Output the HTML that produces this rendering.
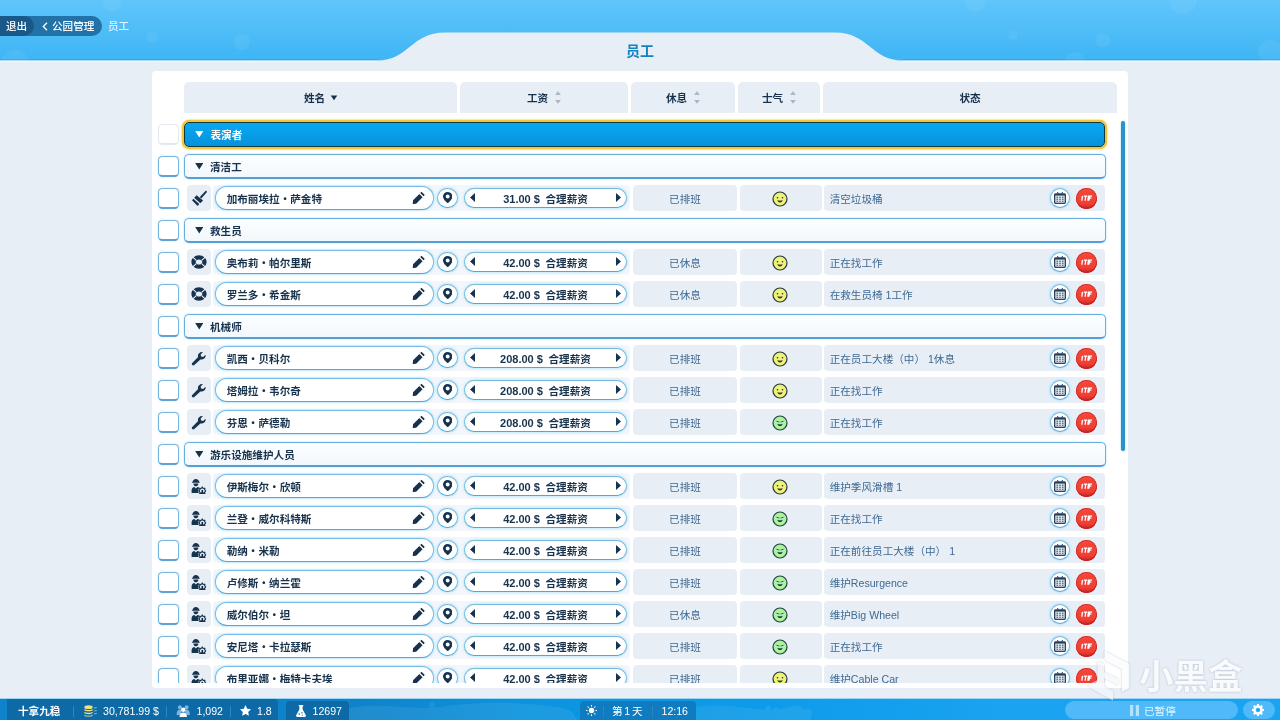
<!DOCTYPE html>
<html lang="zh-CN">
<head>
<meta charset="utf-8">
<title>员工</title>
<style>
*{box-sizing:border-box;margin:0;padding:0}
html,body{width:1280px;height:720px;overflow:hidden}
body{position:relative;background:#e8eef5;font-family:"Liberation Sans","Noto Sans CJK SC",sans-serif;font-size:10.6px;color:#17324d;line-height:1}
#root{position:absolute;left:0;top:0;width:1280px;height:720px;will-change:transform}
#topbg{position:absolute;left:0;top:0;width:1280px;height:64px}
/* breadcrumb */
.nav{position:absolute;top:16px;left:0;height:20px;border-radius:0 10px 10px 0;color:#fff;font-size:10.6px;font-weight:500;line-height:20.6px;white-space:nowrap}
#nav2{width:102px;background:#2272a8;padding-left:43px}
#nav1{width:34px;background:#1a5987;padding-left:6px}
#nav2 svg{position:absolute;left:42px;top:5.5px;width:6px;height:9px}
#nav2 span{position:absolute;left:52px;top:0}
#nav3{position:absolute;left:108px;top:16px;height:20px;line-height:20.6px;color:#dff3ff;font-weight:500}
#title{position:absolute;left:540px;width:200px;top:42px;height:18px;line-height:18px;text-align:center;font-size:14px;font-weight:700;color:#1484c0}
/* panel */
#panel{position:absolute;left:152px;top:71px;width:976px;height:617px;background:#fff;border-radius:4px}
#clip{position:absolute;left:152px;top:114px;width:976px;height:569px;overflow:hidden;will-change:transform}
#clip > div{position:absolute}
.hd{position:absolute;top:82px;height:30.6px;background:#e8eef5;border-radius:5px 5px 0 0;display:flex;justify-content:center;align-items:center;padding-top:2px;font-weight:700;color:#17324d;font-size:10.6px}
.hd svg{display:block;margin:-2px 0 0 7px;width:6px;height:13px}
/* rows (coordinates inside #clip are page coords minus (152,114)) */
#inner{position:absolute;left:-152px;top:-114px;width:1280px;height:720px}
#inner > div{position:absolute}
.cb{left:158px;width:21px;height:21px;border-radius:4.5px;background:#fff;border:1px solid #78b5df;border-bottom:2px solid #5fa3d5;box-shadow:0 0 2px rgba(130,215,250,.7)}
.cb.dis{border-color:#e3e8ef;box-shadow:none}
.grp{left:184px;width:921.5px;height:25px;border-radius:5px;background:linear-gradient(#fcfeff,#f3f8fd);border:1px solid #6aafdd;border-bottom:2px solid #559fd4;box-shadow:0 0 2px rgba(130,215,250,.8);font-weight:700;color:#17324d}
.grp span{position:absolute;left:25px;top:0;line-height:25.2px;font-size:10.6px}
.grp .tri{position:absolute;left:9.5px;top:8.4px;width:8.5px;height:6.5px;fill:#17324d}
.grp.sel{left:184px;width:921px;height:25.5px;border-radius:5px;background:linear-gradient(#0aa8f2,#0692dc);border:1.4px solid #0b3b40;box-shadow:0 0 0 2.200px #f3c53c,0 0 3px 2px rgba(243,197,60,.55);color:#fff}
.grp.sel span{left:25.5px;line-height:24.8px}
.grp.sel .tri{left:9.5px;top:8.4px;fill:#fff}
.row{left:184px;width:922px;height:26px}
.row > div{position:absolute}
.cell{top:0;height:26px;background:#e8eef5;border-radius:4px}
.ic{left:3px;width:24px}
.lt{left:28.5px;width:417px;background:#f3f6fa}
.ic svg{position:absolute;left:4.1px;top:5px;width:16px;height:16px;fill:#17324d}
.pill{background:#fff;border:1px solid #77bbe5;border-bottom:1.6px solid #55a5d8;border-radius:12px;box-shadow:0 0 2.5px rgba(120,215,250,.9)}
.name{left:31px;top:1.4px;width:219px;height:23.8px}
.name span{position:absolute;left:10.7px;top:0;line-height:24.2px;font-weight:700;white-space:nowrap}
.name .pen{position:absolute;right:7.5px;top:3.6px;width:13.5px;height:13.5px;fill:#17324d}
.circ{width:20.6px;height:20.6px;border-radius:50%;background:#fff;border:1px solid #77bbe5;border-bottom:1.6px solid #55a5d8;box-shadow:0 0 2.5px rgba(120,215,250,.9)}
.pin{left:253.2px;top:2.8px}
.pin svg{position:absolute;left:4.6px;top:3.1px;width:9.4px;height:11.3px;fill:#17324d}
.sal{left:280px;top:2.9px;width:163px;height:20.4px;text-align:center}
.n{font-size:11px;margin-right:-.3px}
.sal span{line-height:21.2px;font-weight:700;white-space:nowrap}
.sal svg{position:absolute;top:4.2px;width:5px;height:9px;fill:#17324d}
.sal .al{left:4.5px}.sal .ar{right:5.5px}
.rest{left:449px;width:104px;text-align:center;line-height:28.2px;color:#3f6a93}
.mood{left:556px;width:82px}
.mood svg{position:absolute;left:32.4px;top:6.1px;width:16px;height:16px}
.stat{left:639.7px;width:281.8px;line-height:28.2px;color:#3f6a93}
.stat span{position:absolute;left:6px;white-space:nowrap}
.cal{left:865.7px;top:2.8px}
.cal svg{position:absolute;left:3.3px;top:3px;width:12px;height:12px}
.fire{left:891.8px;top:2.9px;width:20.8px;height:20.8px;border-radius:50%;background:linear-gradient(#f4483c 0,#ee3f35 75%,#c92622 100%);box-shadow:inset 0 -1.5px 0 #c3221f,inset 0 0 0 .8px #cf2f2a}
.fire svg{position:absolute;left:4.8px;top:6.7px;width:11.4px;height:6.4px;fill:#fff}
#sb{position:absolute;left:1121px;top:121px;width:4px;height:330px;border-radius:2px;background:#2c92c7;box-shadow:0 0 2px rgba(120,215,250,.9)}
/* bottom bar */
#bar{position:absolute;left:0;top:698px;width:1280px;height:22px;background:linear-gradient(90deg,#0f83c9 0,#0f83c9 355px,#0b93de 520px,#0d9be9 760px,#19a3f1 1000px,#19a3f1 100%);border-top:1px solid #9fd5f4;color:#fff;font-size:10.6px;white-space:nowrap}
#bar > *{position:absolute}
.dk{background:#0d6aa6;top:0;height:22px}
#bar .t{top:0;line-height:24px}
#bar .sep{top:6.500px;width:1px;height:11px;background:#2f86bd}
#wm{position:absolute;left:1086px;top:648px;width:170px;height:56px;opacity:.7;filter:drop-shadow(0 0 1.2px rgba(90,110,140,.5))}
</style>
</head>
<body>
<div id="root">
<svg width="0" height="0" style="position:absolute">
<defs>
<path id="i-down" d="M0 0H10L5 8Z"/>
<g id="i-brush"><path d="M14.900.6 16.100 1.800 10.300 8.400 8.800 7.100Z"/><path d="M5.600 5.300 12.100 10.500 9.300 13.300 3.200 7.800Z"/><path d="M2.400 8.700 8.300 13.900 6.600 16 5.600 15 1 10.300Z"/></g>
<g id="i-buoy"><path fill-rule="evenodd" d="M8 1.3C12.2 1.3 15.6 4.3 15.6 8S12.2 14.7 8 14.7.4 11.7.4 8 3.800 1.300 8 1.300ZM8 5.400C6.100 5.400 4.700 6.600 4.700 8S6.100 10.600 8 10.600 11.300 9.400 11.300 8 9.900 5.400 8 5.400Z"/><path d="M2.200 2.700 5.700 5.900 4.900 6.700 1.400 3.600ZM13.800 2.700 10.300 5.900 11.100 6.700 14.600 3.600ZM2.200 13.300 5.700 10.100 4.900 9.300 1.400 12.400ZM13.800 13.300 10.300 10.100 11.100 9.300 14.600 12.400Z" fill="#e8eef5"/></g>
<path id="i-wrench" transform="translate(.2 .9) scale(.94)" d="M15.300 4.100C15.600 5.600 15.100 7.200 13.900 8.200 12.700 9.200 11.200 9.500 9.800 9.100L3.300 15.100C2.700 15.700 1.700 15.700 1.100 15.100.5 14.500.5 13.500 1.100 12.900L7.300 6.600C6.900 5.200 7.300 3.600 8.400 2.500 9.500 1.400 11.100 1 12.500 1.300L10.100 3.700 10.500 5.900 12.700 6.400Z"/>
<g id="i-maint"><path d="M1.600 4.300C1.600 2.400 3 1 4.900 1 6.500 1 7.800 2 8.100 3.500L8.600 3.800V4.700H.9V3.900L1.600 3.700ZM2.400 5.400H7.400C7.400 7 6.300 8.300 4.900 8.300S2.400 7 2.400 5.400ZM.6 15V12C.6 10.300 1.800 9.100 3.300 8.900L4.900 10.500 6.500 8.900C7.300 9 8 9.400 8.400 10 7.700 10.800 7.300 11.800 7.300 12.900 7.300 13.700 7.500 14.400 7.800 15Z"/><path fill-rule="evenodd" transform="translate(-.9 0)" d="M11.700 8.600 12.700 8.600 13 9.500 13.900 9.900 14.800 9.500 15.500 10.300 15.100 11.100 15.400 12 16 12.400 16 13.400 15.400 13.800 15.100 14.700 15.500 15.500 15.100 16H9.300L8.900 15.500 9.300 14.700 9 13.800 8.400 13.400 8.400 12.400 9 12 9.300 11.100 8.900 10.300 9.600 9.500 10.500 9.900 11.400 9.500ZM12.200 10.600A2.300 2.300 0 0 0 10.700 14.700L11.500 13.300A.9.900 0 1 1 12.900 13.300L13.700 14.700A2.300 2.300 0 0 0 12.200 10.600Z"/></g>
<path id="i-pen" d="M9.900.7 13.300 4.100 11.900 5.500 8.500 2.100ZM7.600 3 11 6.400 4.300 13.100.7 13.600 1.100 9.700Z"/>
<path id="i-pin" fill-rule="evenodd" d="M5 0C7.800 0 10 2.100 10 4.800 10 7.300 7.300 10.100 5 12 2.700 10.100 0 7.300 0 4.800 0 2.100 2.200 0 5 0ZM5 2.600A2.100 2.100 0 1 0 5 6.800 2.100 2.100 0 1 0 5 2.600Z"/>
<g id="i-face-y"><circle cx="8" cy="8" r="7" fill="#eff272" stroke="#22383f" stroke-width="1.200"/><circle cx="5.500" cy="6.700" r=".8" fill="#22383f"/><circle cx="10.500" cy="6.700" r=".8" fill="#22383f"/><path d="M5.300 9.100C6.300 9.900 9.700 9.900 10.700 9.100 10.400 10.800 9.400 11.500 8 11.500S5.600 10.800 5.300 9.100Z" fill="#22383f"/></g>
<g id="i-face-g"><circle cx="8" cy="8" r="7" fill="#acf1a5" stroke="#1f4537" stroke-width="1.200"/><path d="M4.600 5.700 7.400 6.700 7.200 7.400 4.400 6.600ZM11.400 5.700 8.600 6.700 8.800 7.400 11.600 6.600Z" fill="#1f4537"/><path d="M5.300 8.700C6.300 9.500 9.700 9.500 10.700 8.700 10.400 10.300 9.400 11 8 11S5.600 10.300 5.300 8.700Z" fill="#1f4537"/></g>
<g id="i-cal"><path fill="#2a4058" d="M3.200 0H4.300V1.500H3.200ZM7.700 0H8.800V1.500H7.700Z"/><rect x=".65" y="1.850" width="10.700" height="9.500" rx="1.100" fill="#dde5ee" stroke="#2a4058" stroke-width="1.300"/><path fill="#2a4058" d="M.65 1.900H11.350V3.600H.65Z"/><path fill="#2c4a5e" d="M2.500 4.700H4V5.800H2.500ZM5.250 4.700H6.750V5.800H5.250ZM8 4.700H9.500V5.800H8ZM2.500 6.700H4V7.800H2.500ZM5.250 6.700H6.750V7.800H5.250ZM8 6.700H9.500V7.800H8ZM2.500 8.700H4V9.800H2.500ZM5.250 8.700H6.750V9.800H5.250ZM8 8.700H9.500V9.800H8Z"/></g>
<g id="i-fire"><path d="M.8 1.200H2.200L1.600 7.200H.2ZM2.900.6H6.700L6.500 2.100H5.600L5.100 7.200H3.700L4.200 2.100H2.700ZM7.300.6H11.900L11.700 2.100H9.500L9.400 3.200H11.100L10.900 4.600H9.200L8.900 7.200H6.500Z"/></g>
</defs>
</svg>

<!-- top background -->
<svg id="topbg" viewBox="0 0 1280 64">
<defs><linearGradient id="tg" x1="0" y1="0" x2="0" y2="1"><stop offset="0" stop-color="#60c5fb"/><stop offset="1" stop-color="#3eb5f4"/></linearGradient><clipPath id="tc"><path d="M0 0H1280V60.500H903C871 60.500 869 32.500 835 32.500H445C411 32.500 409 60.500 377 60.500H0Z"/></clipPath></defs>
<path d="M0 0H1280V60.500H903C871 60.500 869 32.500 835 32.500H445C411 32.500 409 60.500 377 60.500H0Z" fill="url(#tg)"/>
<path d="M0 59.800H377M903 59.800H1280" stroke="#3a9bd4" stroke-width="1.400" fill="none" opacity=".6"/><path d="M0 61.200H377M903 61.200H1280" stroke="#f6fbff" stroke-width="1.200" fill="none" opacity=".8"/>
<g fill="#fff" opacity=".06" clip-path="url(#tc)"><circle cx="112" cy="3" r="9"/><circle cx="152" cy="37" r="6"/><circle cx="242" cy="42" r="8"/><circle cx="15" cy="64" r="14"/><circle cx="975" cy="2" r="10"/><circle cx="1103" cy="40" r="7"/><circle cx="1183" cy="0" r="14"/><circle cx="1013" cy="35" r="5"/><circle cx="1270" cy="52" r="12"/><circle cx="1075" cy="62" r="10"/></g>
</svg>

<div class="nav" id="nav2"><svg viewBox="0 0 6 9"><path d="M5 .7 1.300 4.500 5 8.300" fill="none" stroke="#fff" stroke-width="1.300"/></svg><span>公园管理</span></div>
<div class="nav" id="nav1">退出</div>
<div id="nav3">员工</div>
<div id="title">员工</div>

<div id="panel"></div>
<div class="hd" style="left:184px;width:273px">姓名<svg viewBox="0 0 6 13" style="margin-left:6px;overflow:visible"><path d="M-.3 4.600H6.300L3 9.200Z" fill="#17324d"/></svg></div>
<div class="hd" style="left:460px;width:168px">工资<svg viewBox="0 0 6 13"><path d="M3 .3 5.900 3.900H.1ZM3 12.700 5.900 9.100H.1Z" fill="#aab6c3"/></svg></div>
<div class="hd" style="left:631px;width:104px">休息<svg viewBox="0 0 6 13"><path d="M3 .3 5.900 3.900H.1ZM3 12.700 5.900 9.100H.1Z" fill="#aab6c3"/></svg></div>
<div class="hd" style="left:738px;width:82px">士气<svg viewBox="0 0 6 13"><path d="M3 .3 5.900 3.900H.1ZM3 12.700 5.900 9.100H.1Z" fill="#aab6c3"/></svg></div>
<div class="hd" style="left:823px;width:294px">状态</div>

<div id="clip"><div id="inner">
<div class="cb dis" style="top:123.5px"></div>
<div class="grp sel" style="top:121.6px"><svg class="tri" viewBox="0 0 10 8"><use href="#i-down"/></svg><span>表演者</span></div>
<div class="cb" style="top:155.5px"></div>
<div class="grp" style="top:153.8px"><svg class="tri" viewBox="0 0 10 8"><use href="#i-down"/></svg><span>清洁工</span></div>
<div class="cb" style="top:187.5px"></div>
<div class="row" style="top:185px"><div class="cell ic"><svg viewBox="0 0 16 16"><use href="#i-brush"/></svg></div><div class="cell lt"></div><div class="pill name"><span>加布丽埃拉・萨金特</span><svg class="pen" viewBox="0 0 14 14"><use href="#i-pen"/></svg></div><div class="circ pin"><svg viewBox="0 0 10 12"><use href="#i-pin"/></svg></div><div class="pill sal"><svg class="al" viewBox="0 0 5 9"><path d="M5 0V9L0 4.5Z"/></svg><span><b class="n">31.00 $</b>&nbsp; 合理薪资</span><svg class="ar" viewBox="0 0 5 9"><path d="M0 0V9L5 4.5Z"/></svg></div><div class="cell rest">已排班</div><div class="cell mood"><svg viewBox="0 0 16 16"><use href="#i-face-y"/></svg></div><div class="cell stat"><span>清空垃圾桶</span></div><div class="circ cal"><svg viewBox="0 0 12 12"><use href="#i-cal"/></svg></div><div class="fire"><svg viewBox="0 0 12 8" preserveAspectRatio="none"><use href="#i-fire"/></svg></div></div>
<div class="cb" style="top:219.5px"></div>
<div class="grp" style="top:217.8px"><svg class="tri" viewBox="0 0 10 8"><use href="#i-down"/></svg><span>救生员</span></div>
<div class="cb" style="top:251.5px"></div>
<div class="row" style="top:249px"><div class="cell ic"><svg viewBox="0 0 16 16"><use href="#i-buoy"/></svg></div><div class="cell lt"></div><div class="pill name"><span>奥布莉・帕尔里斯</span><svg class="pen" viewBox="0 0 14 14"><use href="#i-pen"/></svg></div><div class="circ pin"><svg viewBox="0 0 10 12"><use href="#i-pin"/></svg></div><div class="pill sal"><svg class="al" viewBox="0 0 5 9"><path d="M5 0V9L0 4.5Z"/></svg><span><b class="n">42.00 $</b>&nbsp; 合理薪资</span><svg class="ar" viewBox="0 0 5 9"><path d="M0 0V9L5 4.5Z"/></svg></div><div class="cell rest">已休息</div><div class="cell mood"><svg viewBox="0 0 16 16"><use href="#i-face-y"/></svg></div><div class="cell stat"><span>正在找工作</span></div><div class="circ cal"><svg viewBox="0 0 12 12"><use href="#i-cal"/></svg></div><div class="fire"><svg viewBox="0 0 12 8" preserveAspectRatio="none"><use href="#i-fire"/></svg></div></div>
<div class="cb" style="top:283.5px"></div>
<div class="row" style="top:281px"><div class="cell ic"><svg viewBox="0 0 16 16"><use href="#i-buoy"/></svg></div><div class="cell lt"></div><div class="pill name"><span>罗兰多・希金斯</span><svg class="pen" viewBox="0 0 14 14"><use href="#i-pen"/></svg></div><div class="circ pin"><svg viewBox="0 0 10 12"><use href="#i-pin"/></svg></div><div class="pill sal"><svg class="al" viewBox="0 0 5 9"><path d="M5 0V9L0 4.5Z"/></svg><span><b class="n">42.00 $</b>&nbsp; 合理薪资</span><svg class="ar" viewBox="0 0 5 9"><path d="M0 0V9L5 4.5Z"/></svg></div><div class="cell rest">已休息</div><div class="cell mood"><svg viewBox="0 0 16 16"><use href="#i-face-y"/></svg></div><div class="cell stat"><span>在救生员椅 1工作</span></div><div class="circ cal"><svg viewBox="0 0 12 12"><use href="#i-cal"/></svg></div><div class="fire"><svg viewBox="0 0 12 8" preserveAspectRatio="none"><use href="#i-fire"/></svg></div></div>
<div class="cb" style="top:315.5px"></div>
<div class="grp" style="top:313.8px"><svg class="tri" viewBox="0 0 10 8"><use href="#i-down"/></svg><span>机械师</span></div>
<div class="cb" style="top:347.5px"></div>
<div class="row" style="top:345px"><div class="cell ic"><svg viewBox="0 0 16 16"><use href="#i-wrench"/></svg></div><div class="cell lt"></div><div class="pill name"><span>凯西・贝科尔</span><svg class="pen" viewBox="0 0 14 14"><use href="#i-pen"/></svg></div><div class="circ pin"><svg viewBox="0 0 10 12"><use href="#i-pin"/></svg></div><div class="pill sal"><svg class="al" viewBox="0 0 5 9"><path d="M5 0V9L0 4.5Z"/></svg><span><b class="n">208.00 $</b>&nbsp; 合理薪资</span><svg class="ar" viewBox="0 0 5 9"><path d="M0 0V9L5 4.5Z"/></svg></div><div class="cell rest">已排班</div><div class="cell mood"><svg viewBox="0 0 16 16"><use href="#i-face-y"/></svg></div><div class="cell stat"><span>正在员工大楼（中） 1休息</span></div><div class="circ cal"><svg viewBox="0 0 12 12"><use href="#i-cal"/></svg></div><div class="fire"><svg viewBox="0 0 12 8" preserveAspectRatio="none"><use href="#i-fire"/></svg></div></div>
<div class="cb" style="top:379.5px"></div>
<div class="row" style="top:377px"><div class="cell ic"><svg viewBox="0 0 16 16"><use href="#i-wrench"/></svg></div><div class="cell lt"></div><div class="pill name"><span>塔姆拉・韦尔奇</span><svg class="pen" viewBox="0 0 14 14"><use href="#i-pen"/></svg></div><div class="circ pin"><svg viewBox="0 0 10 12"><use href="#i-pin"/></svg></div><div class="pill sal"><svg class="al" viewBox="0 0 5 9"><path d="M5 0V9L0 4.5Z"/></svg><span><b class="n">208.00 $</b>&nbsp; 合理薪资</span><svg class="ar" viewBox="0 0 5 9"><path d="M0 0V9L5 4.5Z"/></svg></div><div class="cell rest">已排班</div><div class="cell mood"><svg viewBox="0 0 16 16"><use href="#i-face-y"/></svg></div><div class="cell stat"><span>正在找工作</span></div><div class="circ cal"><svg viewBox="0 0 12 12"><use href="#i-cal"/></svg></div><div class="fire"><svg viewBox="0 0 12 8" preserveAspectRatio="none"><use href="#i-fire"/></svg></div></div>
<div class="cb" style="top:411.5px"></div>
<div class="row" style="top:409px"><div class="cell ic"><svg viewBox="0 0 16 16"><use href="#i-wrench"/></svg></div><div class="cell lt"></div><div class="pill name"><span>芬恩・萨德勒</span><svg class="pen" viewBox="0 0 14 14"><use href="#i-pen"/></svg></div><div class="circ pin"><svg viewBox="0 0 10 12"><use href="#i-pin"/></svg></div><div class="pill sal"><svg class="al" viewBox="0 0 5 9"><path d="M5 0V9L0 4.5Z"/></svg><span><b class="n">208.00 $</b>&nbsp; 合理薪资</span><svg class="ar" viewBox="0 0 5 9"><path d="M0 0V9L5 4.5Z"/></svg></div><div class="cell rest">已排班</div><div class="cell mood"><svg viewBox="0 0 16 16"><use href="#i-face-g"/></svg></div><div class="cell stat"><span>正在找工作</span></div><div class="circ cal"><svg viewBox="0 0 12 12"><use href="#i-cal"/></svg></div><div class="fire"><svg viewBox="0 0 12 8" preserveAspectRatio="none"><use href="#i-fire"/></svg></div></div>
<div class="cb" style="top:443.5px"></div>
<div class="grp" style="top:441.8px"><svg class="tri" viewBox="0 0 10 8"><use href="#i-down"/></svg><span>游乐设施维护人员</span></div>
<div class="cb" style="top:475.5px"></div>
<div class="row" style="top:473px"><div class="cell ic"><svg viewBox="0 0 16 16"><use href="#i-maint"/></svg></div><div class="cell lt"></div><div class="pill name"><span>伊斯梅尔・欣顿</span><svg class="pen" viewBox="0 0 14 14"><use href="#i-pen"/></svg></div><div class="circ pin"><svg viewBox="0 0 10 12"><use href="#i-pin"/></svg></div><div class="pill sal"><svg class="al" viewBox="0 0 5 9"><path d="M5 0V9L0 4.5Z"/></svg><span><b class="n">42.00 $</b>&nbsp; 合理薪资</span><svg class="ar" viewBox="0 0 5 9"><path d="M0 0V9L5 4.5Z"/></svg></div><div class="cell rest">已排班</div><div class="cell mood"><svg viewBox="0 0 16 16"><use href="#i-face-y"/></svg></div><div class="cell stat"><span>维护季风滑槽 1</span></div><div class="circ cal"><svg viewBox="0 0 12 12"><use href="#i-cal"/></svg></div><div class="fire"><svg viewBox="0 0 12 8" preserveAspectRatio="none"><use href="#i-fire"/></svg></div></div>
<div class="cb" style="top:507.5px"></div>
<div class="row" style="top:505px"><div class="cell ic"><svg viewBox="0 0 16 16"><use href="#i-maint"/></svg></div><div class="cell lt"></div><div class="pill name"><span>兰登・威尔科特斯</span><svg class="pen" viewBox="0 0 14 14"><use href="#i-pen"/></svg></div><div class="circ pin"><svg viewBox="0 0 10 12"><use href="#i-pin"/></svg></div><div class="pill sal"><svg class="al" viewBox="0 0 5 9"><path d="M5 0V9L0 4.5Z"/></svg><span><b class="n">42.00 $</b>&nbsp; 合理薪资</span><svg class="ar" viewBox="0 0 5 9"><path d="M0 0V9L5 4.5Z"/></svg></div><div class="cell rest">已排班</div><div class="cell mood"><svg viewBox="0 0 16 16"><use href="#i-face-g"/></svg></div><div class="cell stat"><span>正在找工作</span></div><div class="circ cal"><svg viewBox="0 0 12 12"><use href="#i-cal"/></svg></div><div class="fire"><svg viewBox="0 0 12 8" preserveAspectRatio="none"><use href="#i-fire"/></svg></div></div>
<div class="cb" style="top:539.5px"></div>
<div class="row" style="top:537px"><div class="cell ic"><svg viewBox="0 0 16 16"><use href="#i-maint"/></svg></div><div class="cell lt"></div><div class="pill name"><span>勒纳・米勒</span><svg class="pen" viewBox="0 0 14 14"><use href="#i-pen"/></svg></div><div class="circ pin"><svg viewBox="0 0 10 12"><use href="#i-pin"/></svg></div><div class="pill sal"><svg class="al" viewBox="0 0 5 9"><path d="M5 0V9L0 4.5Z"/></svg><span><b class="n">42.00 $</b>&nbsp; 合理薪资</span><svg class="ar" viewBox="0 0 5 9"><path d="M0 0V9L5 4.5Z"/></svg></div><div class="cell rest">已排班</div><div class="cell mood"><svg viewBox="0 0 16 16"><use href="#i-face-g"/></svg></div><div class="cell stat"><span>正在前往员工大楼（中） 1</span></div><div class="circ cal"><svg viewBox="0 0 12 12"><use href="#i-cal"/></svg></div><div class="fire"><svg viewBox="0 0 12 8" preserveAspectRatio="none"><use href="#i-fire"/></svg></div></div>
<div class="cb" style="top:571.5px"></div>
<div class="row" style="top:569px"><div class="cell ic"><svg viewBox="0 0 16 16"><use href="#i-maint"/></svg></div><div class="cell lt"></div><div class="pill name"><span>卢修斯・纳兰霍</span><svg class="pen" viewBox="0 0 14 14"><use href="#i-pen"/></svg></div><div class="circ pin"><svg viewBox="0 0 10 12"><use href="#i-pin"/></svg></div><div class="pill sal"><svg class="al" viewBox="0 0 5 9"><path d="M5 0V9L0 4.5Z"/></svg><span><b class="n">42.00 $</b>&nbsp; 合理薪资</span><svg class="ar" viewBox="0 0 5 9"><path d="M0 0V9L5 4.5Z"/></svg></div><div class="cell rest">已排班</div><div class="cell mood"><svg viewBox="0 0 16 16"><use href="#i-face-g"/></svg></div><div class="cell stat"><span>维护Resurgence</span></div><div class="circ cal"><svg viewBox="0 0 12 12"><use href="#i-cal"/></svg></div><div class="fire"><svg viewBox="0 0 12 8" preserveAspectRatio="none"><use href="#i-fire"/></svg></div></div>
<div class="cb" style="top:603.5px"></div>
<div class="row" style="top:601px"><div class="cell ic"><svg viewBox="0 0 16 16"><use href="#i-maint"/></svg></div><div class="cell lt"></div><div class="pill name"><span>威尔伯尔・坦</span><svg class="pen" viewBox="0 0 14 14"><use href="#i-pen"/></svg></div><div class="circ pin"><svg viewBox="0 0 10 12"><use href="#i-pin"/></svg></div><div class="pill sal"><svg class="al" viewBox="0 0 5 9"><path d="M5 0V9L0 4.5Z"/></svg><span><b class="n">42.00 $</b>&nbsp; 合理薪资</span><svg class="ar" viewBox="0 0 5 9"><path d="M0 0V9L5 4.5Z"/></svg></div><div class="cell rest">已休息</div><div class="cell mood"><svg viewBox="0 0 16 16"><use href="#i-face-g"/></svg></div><div class="cell stat"><span>维护Big Wheel</span></div><div class="circ cal"><svg viewBox="0 0 12 12"><use href="#i-cal"/></svg></div><div class="fire"><svg viewBox="0 0 12 8" preserveAspectRatio="none"><use href="#i-fire"/></svg></div></div>
<div class="cb" style="top:635.5px"></div>
<div class="row" style="top:633px"><div class="cell ic"><svg viewBox="0 0 16 16"><use href="#i-maint"/></svg></div><div class="cell lt"></div><div class="pill name"><span>安尼塔・卡拉瑟斯</span><svg class="pen" viewBox="0 0 14 14"><use href="#i-pen"/></svg></div><div class="circ pin"><svg viewBox="0 0 10 12"><use href="#i-pin"/></svg></div><div class="pill sal"><svg class="al" viewBox="0 0 5 9"><path d="M5 0V9L0 4.5Z"/></svg><span><b class="n">42.00 $</b>&nbsp; 合理薪资</span><svg class="ar" viewBox="0 0 5 9"><path d="M0 0V9L5 4.5Z"/></svg></div><div class="cell rest">已排班</div><div class="cell mood"><svg viewBox="0 0 16 16"><use href="#i-face-g"/></svg></div><div class="cell stat"><span>正在找工作</span></div><div class="circ cal"><svg viewBox="0 0 12 12"><use href="#i-cal"/></svg></div><div class="fire"><svg viewBox="0 0 12 8" preserveAspectRatio="none"><use href="#i-fire"/></svg></div></div>
<div class="cb" style="top:667.5px"></div>
<div class="row" style="top:665px"><div class="cell ic"><svg viewBox="0 0 16 16"><use href="#i-maint"/></svg></div><div class="cell lt"></div><div class="pill name"><span>布里亚娜・梅特卡夫埃</span><svg class="pen" viewBox="0 0 14 14"><use href="#i-pen"/></svg></div><div class="circ pin"><svg viewBox="0 0 10 12"><use href="#i-pin"/></svg></div><div class="pill sal"><svg class="al" viewBox="0 0 5 9"><path d="M5 0V9L0 4.5Z"/></svg><span><b class="n">42.00 $</b>&nbsp; 合理薪资</span><svg class="ar" viewBox="0 0 5 9"><path d="M0 0V9L5 4.5Z"/></svg></div><div class="cell rest">已排班</div><div class="cell mood"><svg viewBox="0 0 16 16"><use href="#i-face-y"/></svg></div><div class="cell stat"><span>维护Cable Car</span></div><div class="circ cal"><svg viewBox="0 0 12 12"><use href="#i-cal"/></svg></div><div class="fire"><svg viewBox="0 0 12 8" preserveAspectRatio="none"><use href="#i-fire"/></svg></div></div>
</div></div>
<div id="sb"></div>

<!-- bottom bar -->
<div id="bar">
<div class="dk" style="left:7px;width:271px;border-radius:0 4px 0 0"></div>
<div class="dk" style="left:286px;width:63px;top:2px;height:20px;border-radius:4px 4px 0 0"></div>
<div class="dk" style="left:579.500px;width:116px;top:2px;height:20px;border-radius:4px 4px 0 0;background:#0f7bc0"></div>
<svg style="left:349px;top:0;width:931px;height:22px" viewBox="349 0 931 22" preserveAspectRatio="none"><g fill="#fff" opacity=".07"><path d="M349 22V9C380 3 410 12 440 8S500 2 540 6 570 14 579 22Z"/><path d="M696 22V8C730 2 760 16 790 8 800 5 806 8 812 22Z"/><circle cx="432" cy="6" r="3"/><circle cx="768" cy="9" r="2.500"/><circle cx="776" cy="10" r="2"/><circle cx="808" cy="14" r="4"/><circle cx="795" cy="19" r="2.500"/></g></svg>
<span class="t" style="left:18px;font-weight:700">十拿九稳</span>
<i class="sep" style="left:72.500px"></i>
<svg style="left:83.500px;top:6px;width:13px;height:12px" viewBox="0 0 13 12"><g fill="#f2e27a"><ellipse cx="4.500" cy="2.200" rx="4.200" ry="1.900"/><path d="M.3 3.900C1.500 5.200 7.500 5.200 8.700 3.900V5.200C7.500 6.600 1.500 6.600.3 5.200ZM.3 6.800C1.500 8.100 7.500 8.100 8.700 6.800V8.100C7.500 9.500 1.500 9.500.3 8.100ZM.3 9.700C1.500 11 7.500 11 8.700 9.700V10.400C7.500 12 1.500 12 .3 10.400Z"/></g><g fill="#6fb7c9"><path d="M9.800 2.600 12.800 2V3.100L9.800 3.700ZM9.800 5.500 12.800 4.900V6L9.800 6.600ZM9.800 8.400 12.800 7.800V8.900L9.800 9.500Z"/></g></svg>
<span class="t" style="left:103px">30,781.99 $</span>
<i class="sep" style="left:165.500px"></i>
<svg style="left:176.300px;top:5.500px;width:14.500px;height:12.500px" viewBox="0 0 15 13"><g fill="#7db6e2"><circle cx="4" cy="2.300" r="2"/><circle cx="11" cy="2.300" r="2"/><path d="M.6 10.500C.6 6.800 1.800 4.800 4 4.800 5 4.800 5.700 5.200 6.200 5.800L4.500 10.500ZM14.400 10.500C14.400 6.800 13.200 4.800 11 4.800 10 4.800 9.300 5.200 8.800 5.800L10.500 10.500Z"/></g><g fill="#fff"><circle cx="7.500" cy="5" r="2.300"/><path d="M3.600 12.800C3.600 9.600 5 7.900 7.500 7.900S11.400 9.600 11.400 12.800Z"/></g></svg>
<span class="t" style="left:196.500px">1,092</span>
<i class="sep" style="left:229.500px"></i>
<svg style="left:240px;top:5.500px;width:11px;height:11px" viewBox="0 0 11 11"><path fill="#fff" d="M5.500 0 7.200 3.700 11 4.200 8.200 6.900 8.900 10.800 5.500 8.900 2.100 10.800 2.800 6.900 0 4.200 3.800 3.700Z"/></svg>
<span class="t" style="left:257px">1.8</span>
<svg style="left:296px;top:5.500px;width:10px;height:12px" viewBox="0 0 10 12"><path fill="#fff" fill-rule="evenodd" d="M2.800 0H7.200V1.200H6.600V4.200L9.800 10.300C10.200 11.100 9.700 12 8.800 12H1.200C.3 12-.2 11.100.2 10.300L3.400 4.200V1.200H2.800ZM3.300 8.300A.8.800 0 1 0 3.300 9.900.8.800 0 1 0 3.300 8.300ZM6 7A.7.700 0 1 0 6 8.400.7.700 0 1 0 6 7ZM6.300 9.500A.6.600 0 1 0 6.300 10.700.6.600 0 1 0 6.300 9.500Z"/></svg>
<span class="t" style="left:312.500px">12697</span>
<svg style="left:586px;top:6px;width:11px;height:11px" viewBox="0 0 11 11"><circle cx="5.500" cy="5.500" r="2.700" fill="#fff"/><path d="M5.500 0V1.500M5.500 9.500V11M0 5.500H1.500M9.500 5.500H11M1.600 1.600 2.700 2.700M8.300 8.300 9.400 9.400M1.600 9.400 2.700 8.300M8.300 2.700 9.400 1.600" stroke="#fff" stroke-width="1.100"/></svg>
<i class="sep" style="left:603px"></i>
<span class="t" style="left:612px;word-spacing:-1.2px">第 1 天</span>
<i class="sep" style="left:652px"></i>
<span class="t" style="left:661.500px">12:16</span>
<div style="left:1064.500px;top:2px;width:173px;height:18px;border-radius:9px;background:#4fbaf7"></div>
<svg style="left:1130px;top:5.500px;width:9px;height:11px" viewBox="0 0 9 11"><path d="M0 0H3.200V11H0ZM5.800 0H9V11H5.800Z" fill="#b5e2fc"/></svg>
<span class="t" style="left:1144px;color:#e6f6ff">已暂停</span>
<div style="left:1242.500px;top:2px;width:32px;height:18px;border-radius:9px;background:#4fbaf7"></div>
<svg style="left:1252px;top:4.700px;width:12px;height:12px" viewBox="0 0 14 14"><path fill="#fff" fill-rule="evenodd" d="M5.900 0H8.100L8.500 1.800 9.700 2.300 11.200 1.300 12.700 2.800 11.700 4.300 12.200 5.500 14 5.900V8.100L12.200 8.500 11.700 9.700 12.700 11.200 11.200 12.700 9.700 11.700 8.500 12.200 8.100 14H5.900L5.500 12.200 4.300 11.700 2.800 12.700 1.300 11.200 2.300 9.700 1.800 8.500 0 8.100V5.900L1.800 5.500 2.300 4.300 1.300 2.800 2.800 1.300 4.300 2.300 5.500 1.800ZM7 4.300A2.700 2.700 0 1 0 7 9.700 2.700 2.700 0 1 0 7 4.300Z"/><circle cx="7" cy="7" r="1.900" fill="#1fa3ec"/></svg>
</div>

<!-- watermark -->
<svg id="wm" viewBox="0 0 170 56">
<g fill="#fff"><path d="M18.500 3 43.500 16V40L36 44V21L18.500 12Z" opacity=".95"/><path d="M11.700 12.500 18 16V24L32 31V37L18 30V38.500L27 43V52.500L2.600 39V36.500L11.700 32Z" opacity=".85"/></g>
<text x="53" y="41" font-family="'Liberation Sans','Noto Sans CJK SC',sans-serif" font-size="34.500" font-weight="700" fill="#fff">小黑盒</text>
</svg>
</div>
</body>
</html>
